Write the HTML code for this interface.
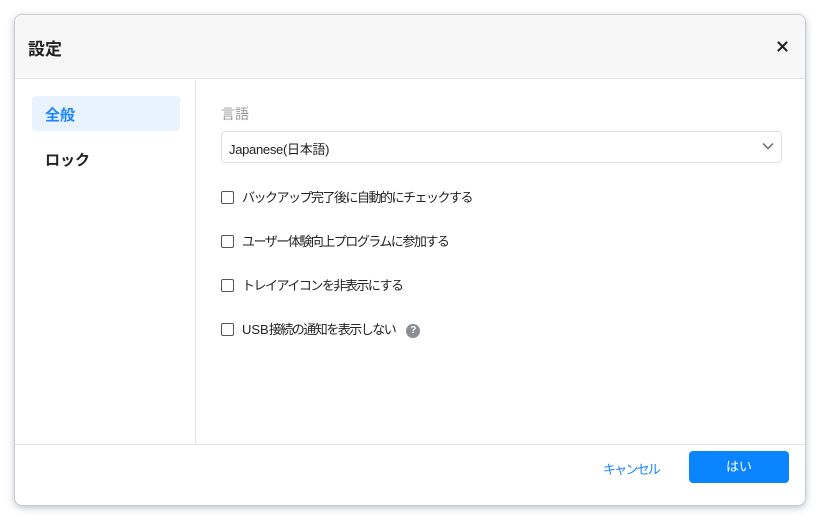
<!DOCTYPE html>
<html><head><meta charset="utf-8"><style>
*{margin:0;padding:0;box-sizing:border-box}
body{width:820px;height:520px;background:#fff;font-family:"Liberation Sans","Noto Sans CJK JP",sans-serif;position:relative;overflow:hidden}
.dlg{position:absolute;left:15px;top:15px;width:790px;height:490px;background:#fff;border-radius:7px;box-shadow:0 0 0 1px #c9ccd3,0 2px 8px rgba(80,90,110,.45);overflow:hidden}
.hdr{position:absolute;left:0;top:0;width:790px;height:64px;background:#f7f7f7;border-bottom:1px solid #e4e4e4}
.ttl{position:absolute;left:13px;top:20px;font-size:17px;font-weight:bold;color:#222}
.x{position:absolute;right:16px;top:25px;width:13px;height:13px}
.side{position:absolute;left:0;top:65px;width:181px;height:364px;border-right:1px solid #e4e4e4}
.nav{position:absolute;left:17px;top:16px;width:148px;height:35px;background:#e8f3ff;border-radius:4px;color:#1a84ff;font-size:15px;font-weight:bold;padding:8px 0 0 13px}
.nav2{position:absolute;left:30px;top:69px;font-size:15px;font-weight:bold;color:#222}
.lbl{position:absolute;left:206px;top:89px;font-size:14px;color:#999}
.sel{position:absolute;left:206px;top:116px;width:561px;height:32px;border:1px solid #dcdfe3;border-radius:4px;font-size:13px;color:#222;padding:7px 0 0 7px;letter-spacing:-0.3px}
.sel svg{position:absolute;right:7px;top:10px}
.cb{position:absolute;left:206px;font-size:13px;color:#222;height:16px;line-height:16px}
.cb i{position:absolute;left:0;top:2px;width:13px;height:13px;border:1.5px solid #555;border-radius:2px}
.cb span{position:absolute;left:21px;top:1px;white-space:nowrap;letter-spacing:-1.5px}
.q{display:inline-block;width:14px;height:14px;border-radius:50%;background:#8a8d93;color:#fff;font-size:10px;font-weight:bold;text-align:center;line-height:14px;margin-left:11px;vertical-align:1px;letter-spacing:0}
.ftr{position:absolute;left:0;top:429px;width:790px;border-top:1px solid #e4e4e4}
.cancel{position:absolute;left:588px;top:444px;font-size:13px;color:#1a84ff;letter-spacing:-1.8px}
.ok{position:absolute;left:674px;top:436px;width:100px;height:32px;background:#0a84ff;border-radius:4px;color:#fff;font-size:13px;text-align:center;line-height:32px}
</style></head><body>
<div class="dlg">
<div class="hdr"><div class="ttl">設定</div>
<svg class="x" viewBox="0 0 14 14"><path d="M2 2L12 12M12 2L2 12" stroke="#222" stroke-width="2.2"/></svg></div>
<div class="side"><div class="nav">全般</div><div class="nav2">ロック</div></div>
<div class="lbl">言語</div>
<div class="sel">Japanese(日本語)<svg width="12" height="8" viewBox="0 0 12 8"><path d="M1 1.5L6 6.5L11 1.5" fill="none" stroke="#666" stroke-width="1.5"/></svg></div>
<div class="cb" style="top:174px"><i></i><span>バックアップ完了後に自動的にチェックする</span></div>
<div class="cb" style="top:218px"><i></i><span>ユーザー体験向上プログラムに参加する</span></div>
<div class="cb" style="top:262px"><i></i><span>トレイアイコンを非表示にする</span></div>
<div class="cb" style="top:306px"><i></i><span><b style="font-weight:normal;letter-spacing:0">USB</b>接続の通知を表示しない<b class="q">?</b></span></div>
<div class="ftr"></div>
<div class="cancel">キャンセル</div>
<div class="ok">はい</div>
</div>
</body></html>
